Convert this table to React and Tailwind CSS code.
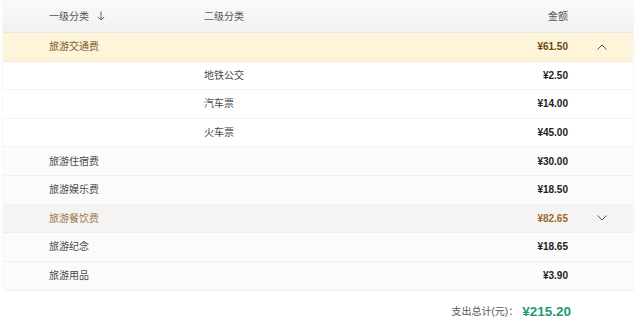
import React from "react";

const font = "font-['Liberation_Sans','Noto_Sans_CJK_SC',sans-serif]";

const rows = [
  { a: "旅游交通费", amt: "¥61.50", kind: "open" },
  { b: "地铁公交", amt: "¥2.50", kind: "child" },
  { b: "汽车票", amt: "¥14.00", kind: "child" },
  { b: "火车票", amt: "¥45.00", kind: "child" },
  { a: "旅游住宿费", amt: "¥30.00" },
  { a: "旅游娱乐费", amt: "¥18.50" },
  { a: "旅游餐饮费", amt: "¥82.65", kind: "closed" },
  { a: "旅游纪念", amt: "¥18.65" },
  { a: "旅游用品", amt: "¥3.90" },
];

function Chevron({ up }) {
  return (
    <svg width="10" height="6" viewBox="0 0 10 6" fill="none" stroke="#555" strokeWidth="1">
      {up ? <polyline points="0.5,5.5 5,1 9.5,5.5" /> : <polyline points="0.5,0.5 5,5 9.5,0.5" />}
    </svg>
  );
}

function Row({ row }) {
  let bg = "bg-[#fbfbfb] border-[#f1f1f1]";
  let text = "text-[#4a4a4a]";
  let amt = "text-[#222]";
  if (row.kind === "open") {
    bg = "bg-[#fdf4d9] border-[#f5ead0]";
    text = "text-[#7a5a2c]";
    amt = "text-[#6b4a18]";
  } else if (row.kind === "closed") {
    bg = "bg-[#f6f4f2] border-[#eeeeee]";
    text = "text-[#9b7a4c]";
    amt = "text-[#9a6a2e]";
  } else if (row.kind === "child") {
    bg = "bg-white border-[#f3f3f3]";
  }
  return (
    <div className={`flex items-center h-[28.6px] border-b ${bg}`}>
      <div className={`w-[201px] pl-[46px] ${text}`}>{row.a}</div>
      <div className="flex-1 text-[#4a4a4a]">{row.b}</div>
      <div className={`font-bold ${amt}`}>{row.amt}</div>
      <div className="w-[65px] flex justify-center pl-[3px]">
        {row.kind === "open" && <Chevron up />}
        {row.kind === "closed" && <Chevron />}
      </div>
    </div>
  );
}

export default function App() {
  return (
    <div className={`w-[638px] h-[323px] bg-white ${font} text-[10px] overflow-hidden`}>
      <div className="mx-[3px] w-[630px] shadow-[0_0_3px_rgba(0,0,0,0.07)]">
        <div className="flex items-center h-[33px] bg-gradient-to-b from-[#fafafa] to-[#f1f1f1] border-b border-[#e6e6e6] text-[#555]">
          <div className="w-[201px] pl-[46px] flex items-center gap-[8px]">
            <span>一级分类</span>
            <svg width="8" height="10" viewBox="0 0 8 10" fill="none" stroke="#666" strokeWidth="1">
              <line x1="4" y1="0.5" x2="4" y2="9" />
              <polyline points="0.8,5.8 4,9 7.2,5.8" />
            </svg>
          </div>
          <div className="flex-1">二级分类</div>
          <div>金额</div>
          <div className="w-[65px]" />
        </div>
        {rows.map((r, i) => (
          <Row key={i} row={r} />
        ))}
      </div>
      <div className="flex items-center justify-end h-[43px] pr-[67px]">
        <span className="text-[#555] text-[10px]">支出总计(元)：</span>
        <span className="ml-[4px] text-[#1e9a6e] font-bold text-[13.5px]">¥215.20</span>
      </div>
    </div>
  );
}
